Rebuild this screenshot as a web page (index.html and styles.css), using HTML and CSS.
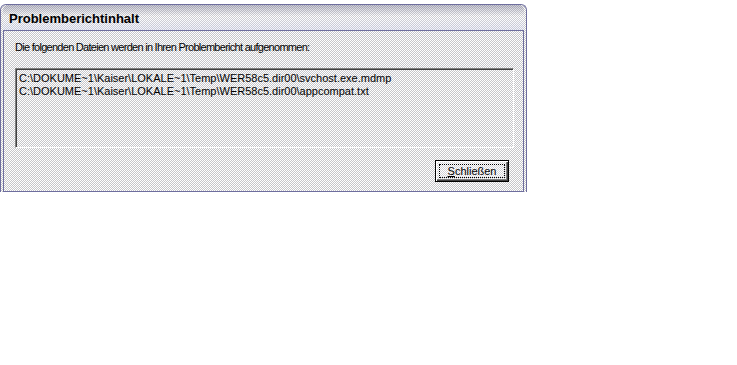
FILE: index.html
```html
<!DOCTYPE html>
<html>
<head>
  <meta charset="utf-8">
  <title>Problemberichtinhalt</title>
  <link rel="stylesheet" href="styles.css">
</head>
<body>
<div class="window">
  <div class="title">Problemberichtinhalt</div>
  <div class="panel">
    <div class="label">Die folgenden Dateien werden in Ihren Problembericht aufgenommen:</div>
    <div class="list">
      <div class="item">C:\DOKUME~1\Kaiser\LOKALE~1\Temp\WER58c5.dir00\svchost.exe.mdmp</div>
      <div class="item">C:\DOKUME~1\Kaiser\LOKALE~1\Temp\WER58c5.dir00\appcompat.txt</div>
    </div>
    <div class="buttons">
      <div class="button"><span class="focus"><u>S</u>chließen</span></div>
    </div>
  </div>
</div>
</body>
</html>
```

FILE: styles.css
```css
body { margin:0px; padding:0px; background:#fff;
  font-family:"Liberation Sans", Arial, sans-serif; font-size:11px; color:#000; }

/* окно диалога */
.window { margin-top:4px; width:521px; height:187px;
  border:1px solid #6e6e9e; border-bottom:none; border-radius:6px 6px 0 0;
  padding:0px 2px 0px 2px; display:flex; flex-direction:column;
  background:repeating-conic-gradient(#c6c6ca 0 25%, #fff 0 50%) 0 0/2px 2px; }
.title { height:25px; line-height:27px; padding-left:6px; flex:none;
  font-weight:bold; font-size:13px; border-radius:5px 5px 0 0;
  background:linear-gradient(rgba(110,110,140,.4), rgba(255,255,255,.15) 45%, rgba(210,215,245,.35)),
    repeating-conic-gradient(#c6c6ca 0 25%, #fff 0 50%) 0 0/2px 2px; }
.panel { flex:1; border:1px solid #6e6e9e; box-shadow:0 1px 0 #6e6e9e;
  padding:10px 9px 0px 11px; display:flex; flex-direction:column; }

.label { height:13px; line-height:13px; letter-spacing:-0.72px; }

.list { margin-top:14px; height:72px; padding:3px 3px;
  border:1px solid; border-color:#808080 #fff #fff #808080;
  box-shadow:inset 1px 1px 0 #404040; }
.item { line-height:13px; }

.buttons { display:flex; justify-content:flex-end; margin-top:12px; padding-right:5px; }
.button { border:1px solid #000;
  box-shadow:inset 1px 1px 0 #fff, inset -1px -1px 0 #404040, inset -2px -2px 0 #808080;
  padding:3px; width:66px; height:14px;
  background:repeating-conic-gradient(#d4d4d8 0 25%, #fff 0 50%) 0 0/2px 2px; }
.focus { display:block; height:12px; border:1px dotted #000; text-align:center; line-height:12px; }
```
